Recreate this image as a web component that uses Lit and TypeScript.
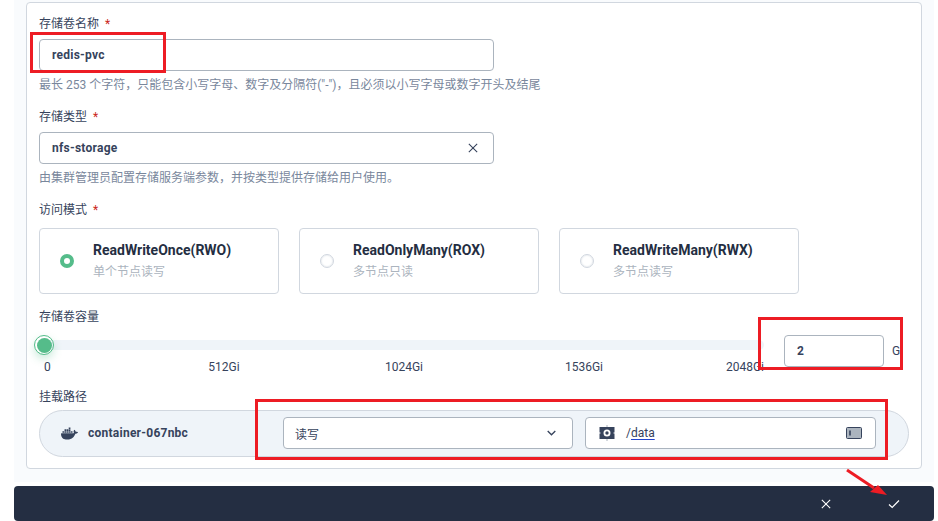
import { LitElement, css, html } from "lit";
import { customElement } from "lit/decorators.js";
import { classMap } from "lit/directives/class-map.js";

const DOCKER_PATH =
  "M13.983 11.078h2.119a.186.186 0 00.186-.185V9.006a.186.186 0 00-.186-.186h-2.119a.185.185 0 00-.185.185v1.888c0 .102.083.185.185.185m-2.954-5.43h2.118a.186.186 0 00.186-.186V3.574a.186.186 0 00-.186-.185h-2.118a.185.185 0 00-.185.185v1.888c0 .102.082.185.185.186m0 2.716h2.118a.187.187 0 00.186-.186V6.29a.186.186 0 00-.186-.185h-2.118a.185.185 0 00-.185.185v1.887c0 .102.082.185.185.186m-2.93 0h2.12a.186.186 0 00.184-.186V6.29a.185.185 0 00-.185-.185H8.1a.185.185 0 00-.185.185v1.887c0 .102.083.185.185.186m-2.964 0h2.119a.186.186 0 00.185-.186V6.29a.185.185 0 00-.185-.185H5.136a.186.186 0 00-.186.185v1.887c0 .102.084.185.186.186m5.893 2.715h2.118a.186.186 0 00.186-.185V9.006a.186.186 0 00-.186-.186h-2.118a.185.185 0 00-.185.185v1.888c0 .102.082.185.185.185m-2.93 0h2.12a.185.185 0 00.184-.185V9.006a.185.185 0 00-.184-.186h-2.12a.185.185 0 00-.184.185v1.888c0 .102.083.185.185.185m-2.964 0h2.119a.185.185 0 00.185-.185V9.006a.185.185 0 00-.184-.186h-2.12a.186.186 0 00-.186.186v1.887c0 .102.084.185.186.185m-2.92 0h2.12a.185.185 0 00.184-.185V9.006a.185.185 0 00-.184-.186h-2.12a.185.185 0 00-.184.185v1.888c0 .102.082.185.185.185M23.763 9.89c-.065-.051-.672-.51-1.954-.51-.338.001-.676.03-1.01.087-.248-1.7-1.653-2.53-1.716-2.566l-.344-.199-.226.327c-.284.438-.49.922-.612 1.43-.23.97-.09 1.882.403 2.661-.595.332-1.55.413-1.744.42H.751a.751.751 0 00-.75.748 11.376 11.376 0 00.692 4.062c.545 1.428 1.355 2.48 2.41 3.124 1.18.723 3.1 1.137 5.275 1.137.983.003 1.963-.086 2.93-.266a12.248 12.248 0 003.823-1.389c.98-.567 1.86-1.288 2.61-2.136 1.252-1.418 1.998-2.997 2.553-4.4h.221c1.372 0 2.215-.549 2.68-1.009.309-.293.55-.65.707-1.046l.098-.288Z";

const MODES = [
  { title: "ReadWriteOnce(RWO)", sub: "单个节点读写", checked: true },
  { title: "ReadOnlyMany(ROX)", sub: "多节点只读", checked: false },
  { title: "ReadWriteMany(RWX)", sub: "多节点读写", checked: false },
];

const MARKS = [
  { text: "0", at: 0, shift: 0 },
  { text: "512Gi", at: 25, shift: -50 },
  { text: "1024Gi", at: 50, shift: -50 },
  { text: "1536Gi", at: 75, shift: -50 },
  { text: "2048Gi", at: 100, shift: -100 },
];

@customElement("app-root")
export class AppRoot extends LitElement {
  static styles = css`
    :host {
      display: block;
      position: relative;
      width: 938px;
      height: 521px;
      overflow: hidden;
      background: #fff;
      font-family: Roboto, "Noto Sans CJK SC", sans-serif;
      font-size: 12px;
      color: #36435c;
    }
    .panel {
      width: 920px;
      height: 482px;
      margin-left: 14px;
      padding: 2px 12px 0;
      box-sizing: border-box;
      background: #f9fbfd;
    }
    .card {
      height: 467px;
      padding: 12px 12px 0;
      box-sizing: border-box;
      background: #fff;
      border: 1px solid #d1d7df;
      border-radius: 4px;
    }
    .label {
      height: 18px;
      line-height: 18px;
    }
    .label i {
      margin-left: 6px;
      font-style: normal;
      color: #ca2621;
    }
    .input {
      display: flex;
      align-items: center;
      height: 32px;
      padding: 0 12px;
      box-sizing: border-box;
      background: #fff;
      border: 1px solid #abb4be;
      border-radius: 4px;
      font-weight: 700;
      letter-spacing: 0.25px;
      color: #36435c;
    }
    .wide {
      width: 455px;
      margin-top: 6px;
    }
    .hint {
      height: 16px;
      margin: 6px 0 15px;
      line-height: 16px;
      color: #79879c;
    }
    .grow {
      flex: 1;
    }
    .clear {
      margin-right: 3px;
    }
    .modes {
      display: flex;
      gap: 20px;
      margin: 9px 0 14px;
    }
    .mode {
      display: flex;
      align-items: center;
      gap: 19px;
      width: 240px;
      height: 66px;
      padding-left: 20px;
      box-sizing: border-box;
      border: 1px solid #d1d7df;
      border-radius: 4px;
    }
    .radio {
      width: 14px;
      height: 14px;
      box-sizing: border-box;
      border: 1px solid #d1d7df;
      border-radius: 50%;
      background: #fff;
      box-shadow: inset 0 0 2px #d1d7df;
    }
    .radio.on {
      border: 4px solid #55bc8a;
      box-shadow: none;
    }
    .mode-title {
      font-size: 14px;
      line-height: 20px;
      font-weight: 700;
      color: #242e42;
    }
    .mode-sub {
      margin-top: 2px;
      line-height: 20px;
      color: #abb4be;
    }
    .capacity {
      display: flex;
      height: 32px;
      margin: 9px 0 21px;
    }
    .slider {
      position: relative;
      width: 720px;
      height: 32px;
      margin: 0 20px 0 5px;
    }
    .track {
      height: 10px;
      margin: 5px 0 0 -5px;
      border-radius: 0 5px 5px 0;
      background: #eff4f9;
    }
    .thumb {
      position: absolute;
      left: -10px;
      top: 0;
      width: 20px;
      height: 20px;
      box-sizing: border-box;
      padding: 1.5px;
      border: 1px solid #55bc8a;
      border-radius: 50%;
      background: #55bc8a;
      background-clip: content-box;
      box-shadow: 0 4px 8px rgba(85, 188, 138, 0.3);
    }
    .mark {
      position: absolute;
      top: 25px;
      line-height: 14px;
      white-space: nowrap;
    }
    .size {
      width: 100px;
    }
    .unit {
      margin-left: 8px;
      line-height: 32px;
    }
    .mount {
      display: flex;
      align-items: center;
      height: 47px;
      margin-top: 4px;
      padding: 0 32px 1px 0;
      box-sizing: border-box;
      background: #eff4f9;
      border: 1px solid #d1d7df;
      border-radius: 24px;
    }
    .container {
      display: flex;
      align-items: center;
      gap: 10px;
      width: 243px;
      padding-left: 21px;
      box-sizing: border-box;
      font-weight: 700;
      letter-spacing: 0.25px;
    }
    .select {
      width: 290px;
      margin-right: 12px;
      padding-left: 11px;
      font-weight: 400;
      letter-spacing: 0;
    }
    .chevron {
      margin-right: 4px;
    }
    .path {
      width: 291px;
      padding-left: 13px;
      font-weight: 400;
      letter-spacing: 0;
    }
    .path u {
      text-decoration-color: #2244cc;
      text-underline-offset: 2px;
    }
    .path-text {
      margin-left: 11px;
    }
    .disk {
      margin-right: 1px;
    }
    svg {
      display: block;
      flex: none;
    }
    .footer {
      display: flex;
      justify-content: flex-end;
      width: 920px;
      height: 35px;
      margin: 4px 0 0 14px;
      padding-right: 6px;
      box-sizing: border-box;
      background: #242e42;
      border-radius: 4px;
    }
    .action {
      display: flex;
      align-items: center;
      justify-content: center;
      width: 68px;
    }
    .note {
      position: absolute;
      box-sizing: border-box;
      border: 3px solid #ed1c24;
    }
    .note-name {
      left: 30px;
      top: 32px;
      width: 136px;
      height: 41px;
    }
    .note-size {
      left: 758px;
      top: 317px;
      width: 145px;
      height: 53px;
    }
    .note-mount {
      left: 255px;
      top: 399px;
      width: 633px;
      height: 61px;
    }
    .arrow {
      position: absolute;
      left: 840px;
      top: 465px;
    }
  `;

  private _cross(color: string, size: number) {
    return html`<svg width=${size} height=${size} viewBox="0 0 12 12" fill="none" stroke=${color} stroke-width="1.3">
      <path d="M1 1l10 10M11 1L1 11" />
    </svg>`;
  }

  private _label(text: string, required = true) {
    return html`<div class="label">${text}${required ? html`<i>*</i>` : ""}</div>`;
  }

  private _renderMode(mode: { title: string; sub: string; checked: boolean }) {
    return html`<div class="mode">
      <div class=${classMap({ radio: true, on: mode.checked })}></div>
      <div>
        <div class="mode-title">${mode.title}</div>
        <div class="mode-sub">${mode.sub}</div>
      </div>
    </div>`;
  }

  private _renderSlider() {
    return html`<div class="slider">
      <div class="track"></div>
      <div class="thumb"></div>
      ${MARKS.map(
        (m) => html`<span class="mark" style="left:${m.at}%;transform:translateX(${m.shift}%)">${m.text}</span>`
      )}
    </div>`;
  }

  private _renderMount() {
    return html`<div class="mount">
      <div class="container">
        <svg width="17" height="17" viewBox="0 0 24 24" fill="#36435c"><path d=${DOCKER_PATH} /></svg>
        <span>container-067nbc</span>
      </div>
      <div class="input select">
        <span class="grow">读写</span>
        <svg class="chevron" width="9" height="6" viewBox="0 0 9 6" fill="none" stroke="#36435c" stroke-width="1.3">
          <path d="M.7 1l3.8 3.8L8.3 1" />
        </svg>
      </div>
      <div class="input path">
        <svg width="16" height="16" viewBox="0 0 16 16">
          <path d="M.5 2h15v12H.5z" fill="#36435c" />
          <path d="M8 0v2M8 14v2" stroke="#abb4be" stroke-width="1" />
          <circle cx="8" cy="8" r="2.6" fill="none" stroke="#fff" stroke-width="1.8" />
          <path d="M0 8h1.5M14.5 8H16" stroke="#fff" stroke-width="1.2" />
        </svg>
        <span class="grow path-text">/<u>data</u></span>
        <svg class="disk" width="16" height="12" viewBox="0 0 16 12">
          <rect x=".5" y=".5" width="15" height="11" rx="1" fill="#abb4be" stroke="#36435c" />
          <path d="M4 3.5v5" stroke="#36435c" stroke-width="1.6" />
        </svg>
      </div>
    </div>`;
  }

  render() {
    return html`
      <div class="panel">
        <div class="card">
          ${this._label("存储卷名称")}
          <div class="input wide">redis-pvc</div>
          <div class="hint">最长 253 个字符，只能包含小写字母、数字及分隔符("-")，且必须以小写字母或数字开头及结尾</div>
          ${this._label("存储类型")}
          <div class="input wide">
            <span class="grow">nfs-storage</span>
            <span class="clear">${this._cross("#36435c", 10)}</span>
          </div>
          <div class="hint">由集群管理员配置存储服务端参数，并按类型提供存储给用户使用。</div>
          ${this._label("访问模式")}
          <div class="modes">${MODES.map((m) => this._renderMode(m))}</div>
          ${this._label("存储卷容量", false)}
          <div class="capacity">
            ${this._renderSlider()}
            <div class="input size">2</div>
            <span class="unit">Gi</span>
          </div>
          ${this._label("挂载路径", false)}
          ${this._renderMount()}
        </div>
      </div>
      <div class="footer">
        <div class="action">${this._cross("#fff", 10)}</div>
        <div class="action">
          <svg width="12" height="10" viewBox="0 0 12 10" fill="none" stroke="#fff" stroke-width="1.2">
            <path d="M1 5.5L4.2 8.5 11 1.5" />
          </svg>
        </div>
      </div>
      <div class="note note-name"></div>
      <div class="note note-size"></div>
      <div class="note note-mount"></div>
      <svg class="arrow" width="50" height="34" viewBox="0 0 50 34">
        <path d="M7 5L34 23" stroke="#ed1c24" stroke-width="3" fill="none" />
        <path d="M47 30L30 27 38 20z" fill="#ed1c24" />
      </svg>
    `;
  }
}
